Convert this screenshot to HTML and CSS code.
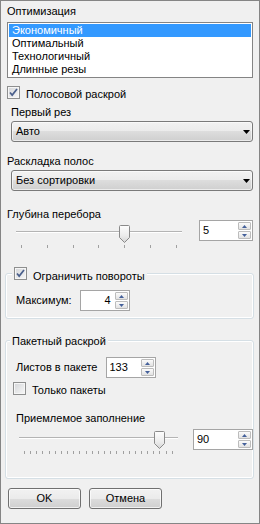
FILE: index.html
```html
<!DOCTYPE html>
<html lang="ru">
<head>
    <meta charset="UTF-8">
    <meta name="viewport" content="width=device-width, initial-scale=1.0">
    <title>Параметры раскроя</title>
    <link rel="stylesheet" href="styles.css">
</head>
<body>
    <div class="window">
        <div class="caption">Оптимизация</div>
        <ul class="listbox">
            <li class="selected">Экономичный</li>
            <li>Оптимальный</li>
            <li>Технологичный</li>
            <li>Длинные резы</li>
        </ul>

        <label class="check check-strip">
            <span class="box"><svg width="11" height="11" viewBox="0 0 11 11"><path d="M2 5.5l2.2 2.6L9 2" fill="none" stroke="#4a5f8c" stroke-width="1.7"/></svg></span>
            <span class="check-text">Полосовой раскрой</span>
        </label>

        <div class="caption caption-indent">Первый рез</div>
        <div class="combo">
            <span>Авто</span>
            <svg class="arrow" width="7" height="4" viewBox="0 0 7 4"><polygon points="0,0 7,0 3.5,4" fill="#000"/></svg>
        </div>

        <div class="caption caption-layout">Раскладка полос</div>
        <div class="combo">
            <span>Без сортировки</span>
            <svg class="arrow" width="7" height="4" viewBox="0 0 7 4"><polygon points="0,0 7,0 3.5,4" fill="#000"/></svg>
        </div>

        <div class="depth-row">
            <div class="depth-left">
                <div class="caption">Глубина перебора</div>
                <div class="slider slider-depth">
                    <div class="track"></div>
                    <div class="ticks">
                        <i></i><i></i><i></i><i></i><i></i><i></i><i></i>
                    </div>
                    <svg class="thumb" width="11" height="18" viewBox="0 0 11 18">
                        <defs>
                            <linearGradient id="thumb-fill" x1="0" y1="0" x2="0" y2="1">
                                <stop offset="0" stop-color="#fdfdfd"/>
                                <stop offset="0.6" stop-color="#ececec"/>
                                <stop offset="1" stop-color="#d4d4d4"/>
                            </linearGradient>
                        </defs>
                        <path d="M1.5 .5h8a1 1 0 0 1 1 1v11l-5 5l-5-5v-11a1 1 0 0 1 1-1z" fill="url(#thumb-fill)" stroke="#8a8a8a"/>
                    </svg>
                </div>
            </div>
            <div class="spin spin-depth">
                <span class="spin-value">5</span>
                <span class="spin-btns">
                    <span class="spin-btn"><svg width="5" height="3" viewBox="0 0 5 3"><polygon points="2.5,0 5,3 0,3" fill="#44609a"/></svg></span>
                    <span class="spin-btn"><svg width="5" height="3" viewBox="0 0 5 3"><polygon points="0,0 5,0 2.5,3" fill="#44609a"/></svg></span>
                </span>
            </div>
        </div>

        <div class="group group-turns">
            <label class="group-title check check-legend">
                <span class="box"><svg width="11" height="11" viewBox="0 0 11 11"><path d="M2 5.5l2.2 2.6L9 2" fill="none" stroke="#4a5f8c" stroke-width="1.7"/></svg></span>
                <span class="check-text">Ограничить повороты</span>
            </label>
            <div class="field-row">
                <span class="field-label">Максимум:</span>
                <div class="spin spin-max">
                    <span class="spin-value">4</span>
                    <span class="spin-btns">
                        <span class="spin-btn"><svg width="5" height="3" viewBox="0 0 5 3"><polygon points="2.5,0 5,3 0,3" fill="#44609a"/></svg></span>
                        <span class="spin-btn"><svg width="5" height="3" viewBox="0 0 5 3"><polygon points="0,0 5,0 2.5,3" fill="#44609a"/></svg></span>
                    </span>
                </div>
            </div>
        </div>

        <div class="group group-pack">
            <div class="group-title">Пакетный раскрой</div>
            <div class="field-row field-sheets">
                <span class="field-label">Листов в пакете</span>
                <div class="spin spin-sheets">
                    <span class="spin-value">133</span>
                    <span class="spin-btns">
                        <span class="spin-btn"><svg width="5" height="3" viewBox="0 0 5 3"><polygon points="2.5,0 5,3 0,3" fill="#44609a"/></svg></span>
                        <span class="spin-btn"><svg width="5" height="3" viewBox="0 0 5 3"><polygon points="0,0 5,0 2.5,3" fill="#44609a"/></svg></span>
                    </span>
                </div>
            </div>
            <label class="check check-packs">
                <span class="box"></span>
                <span class="check-text">Только пакеты</span>
            </label>
            <div class="caption caption-fill">Приемлемое заполнение</div>
            <div class="fill-row">
                <div class="slider slider-fill">
                    <div class="track"></div>
                    <div class="ticks">
                        <i></i><i></i><i></i><i></i><i></i><i></i><i></i><i></i><i></i><i></i>
                        <i></i><i></i><i></i><i></i><i></i><i></i><i></i><i></i><i></i><i></i>
                        <i></i><i></i><i></i><i></i><i></i>
                    </div>
                    <svg class="thumb" width="11" height="18" viewBox="0 0 11 18">
                        <path d="M1.5 .5h8a1 1 0 0 1 1 1v11l-5 5l-5-5v-11a1 1 0 0 1 1-1z" fill="url(#thumb-fill)" stroke="#8a8a8a"/>
                    </svg>
                </div>
                <div class="spin spin-fill">
                    <span class="spin-value">90</span>
                    <span class="spin-btns">
                        <span class="spin-btn"><svg width="5" height="3" viewBox="0 0 5 3"><polygon points="2.5,0 5,3 0,3" fill="#44609a"/></svg></span>
                        <span class="spin-btn"><svg width="5" height="3" viewBox="0 0 5 3"><polygon points="0,0 5,0 2.5,3" fill="#44609a"/></svg></span>
                    </span>
                </div>
            </div>
        </div>

        <div class="buttons">
            <button class="btn">OK</button>
            <button class="btn">Отмена</button>
        </div>
    </div>
</body>
</html>
```

FILE: styles.css
```css
body {
    margin: 0;
    font-family: "Liberation Sans", Arial, sans-serif;
    font-size: 11px;
    color: #000;
    background-color: #f0f0f0;
}

.window {
    box-sizing: border-box;
    width: 260px;
    height: 524px;
    padding: 4px 6px 0;
    border: 1px solid #858585;
    background-color: #f0f0f0;
    line-height: 13px;
}

.caption-indent {
    margin: 5px 0 0 4px;
}

.caption-layout {
    margin-top: 13px;
}

/* list */
.listbox {
    list-style: none;
    margin: 4px 0 0;
    padding: 1px;
    border: 1px solid #848484;
    background-color: #fff;
}

.listbox li {
    height: 13px;
    padding-left: 3px;
    white-space: nowrap;
}

.listbox .selected {
    background-color: #3399ff;
    color: #fff;
}

/* checkboxes */
.check {
    display: flex;
    align-items: flex-start;
    gap: 6px;
}

.check-text {
    margin-top: 2px;
    white-space: nowrap;
}

.check-strip {
    margin-top: 8px;
}

.box {
    display: flex;
    align-items: center;
    justify-content: center;
    flex: 0 0 13px;
    box-sizing: border-box;
    width: 13px;
    height: 13px;
    border: 1px solid #8e8f8f;
    background: linear-gradient(135deg, #d3d5d8, #f8f8f8);
    box-shadow: inset 0 0 0 1px #f6f6f6;
}

/* combo boxes */
.combo {
    display: flex;
    align-items: center;
    justify-content: space-between;
    box-sizing: border-box;
    height: 21px;
    margin: 2px 0 0 4px;
    padding: 0 2px 0 4px;
    border: 1px solid #7a7a7a;
    border-radius: 3px;
    background: linear-gradient(#f2f2f2 0%, #ebebeb 50%, #dddddd 50%, #cfcfcf 100%);
    box-shadow: inset 0 0 0 1px rgba(255, 255, 255, 0.6);
}

/* sliders */
.depth-row {
    display: flex;
    margin-top: 17px;
}

.depth-left {
    flex: 1;
}

.slider {
    position: relative;
    box-sizing: border-box;
    height: 25px;
    padding-top: 7px;
}

.slider-depth {
    width: 166px;
    margin: 3px 0 0 9px;
}

.track {
    height: 1px;
    background-color: #b4b4b4;
    border-bottom: 1px solid #fff;
}

.ticks {
    display: flex;
    justify-content: space-between;
    height: 3px;
    margin: 12px 5px 0;
}

.ticks i {
    width: 1px;
    background-color: #a0a0a0;
}

.thumb {
    position: absolute;
    top: 1px;
    display: block;
}

.slider-depth .thumb {
    left: 103px;
}

.slider-fill {
    width: 159px;
    margin: 1px 0 0 6px;
}

.slider-fill .thumb {
    left: 135px;
}

/* spin edits */
.spin {
    display: flex;
    box-sizing: border-box;
    height: 21px;
    padding: 1px;
    border: 1px solid #a5a5a5;
    background-color: #fff;
}

.spin-value {
    flex: 1;
    padding-left: 2px;
    line-height: 17px;
}

.spin-btns {
    display: flex;
    flex-direction: column;
    gap: 1px;
    width: 13px;
}

.spin-btn {
    display: flex;
    align-items: center;
    justify-content: center;
    flex: 1;
    border: 1px solid #bcbcbc;
    border-radius: 1px;
    background: linear-gradient(#fbfbfb, #e2e2e2);
}

.spin-depth {
    width: 54px;
    margin-top: 12px;
}

.spin-max {
    width: 50px;
}

.spin-max .spin-value {
    padding-right: 4px;
    text-align: right;
}

.spin-sheets {
    width: 50px;
}

.spin-fill {
    width: 60px;
    margin-left: auto;
}

/* group boxes */
.group {
    margin: 21px -1px 0 -2px;
    padding: 0 0 7px 7px;
    border: 1px solid #d5dfe5;
    border-radius: 3px;
    box-shadow: inset 0 0 0 1px #fff;
}

.group-turns {
    margin-top: 24px;
}

.group-pack {
    padding-bottom: 23px;
}

.group-title {
    width: fit-content;
    margin: -6px 0 0 -3px;
    padding: 0 2px;
    background-color: #f0f0f0;
}

.check-legend {
    margin: -7px 0 0 -1px;
}

.check-legend .check-text {
    margin-top: 3px;
}

.field-row {
    display: flex;
    align-items: center;
    gap: 8px;
    margin-top: 7px;
}

.field-label {
    margin-left: 3px;
    white-space: nowrap;
}

.field-sheets {
    margin-top: 9px;
}

.check-packs {
    margin-top: 4px;
}

.caption-fill {
    margin: 15px 0 0 3px;
}

.fill-row {
    display: flex;
    align-items: flex-start;
    margin-top: 4px;
}

/* buttons */
.buttons {
    display: flex;
    gap: 8px;
    margin: 9px 0 0 1px;
}

.btn {
    width: 73px;
    height: 21px;
    padding: 0;
    border: 1px solid #707070;
    border-radius: 3px;
    background: linear-gradient(#f2f2f2 0%, #ebebeb 50%, #dddddd 50%, #cfcfcf 100%);
    box-shadow: inset 0 0 0 1px rgba(255, 255, 255, 0.7);
    font: inherit;
    color: #000;
}
```
